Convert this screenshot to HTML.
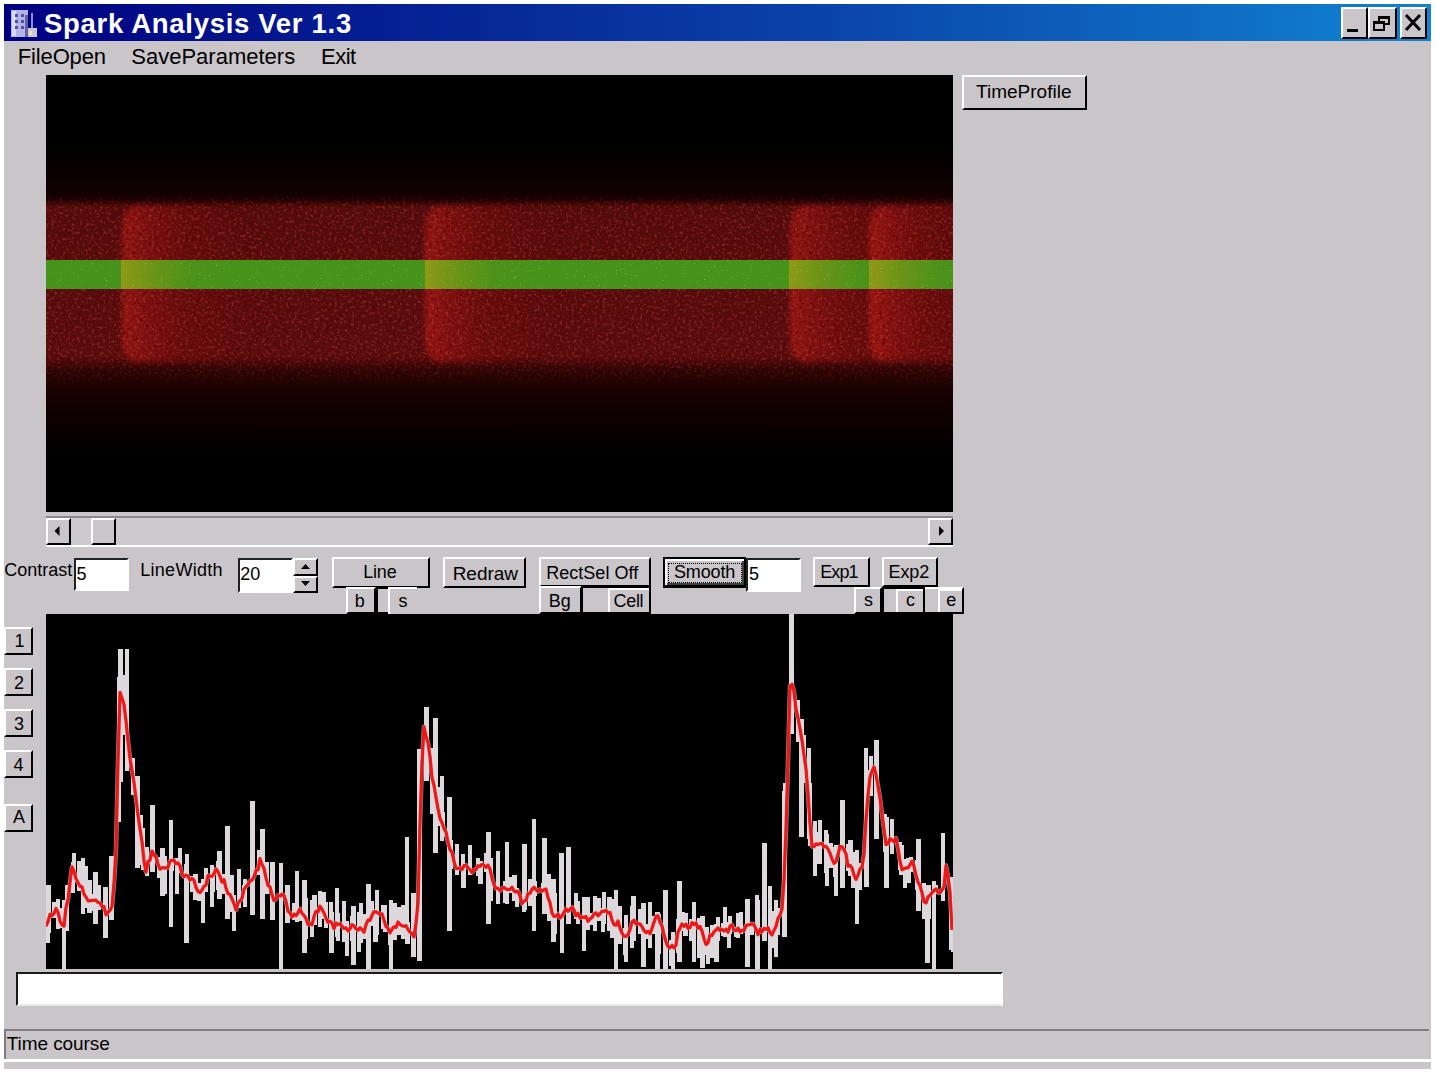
<!DOCTYPE html>
<html><head><meta charset="utf-8"><style>
html,body{margin:0;padding:0;background:#fff;width:1436px;height:1072px;overflow:hidden;position:relative;font-family:"Liberation Sans", sans-serif;}
.abs{position:absolute;}
.win{position:absolute;left:4px;top:4px;width:1427px;height:1065px;background:#c9c5c9;}
.btn{position:absolute;box-sizing:border-box;border:2px solid;border-color:#fff #000 #000 #fff;background:#c9c5c9;display:flex;align-items:center;justify-content:center;color:#000;}
.btn span{line-height:1;white-space:pre;}
.fld{position:absolute;box-sizing:border-box;border:2px solid;border-color:#222 #fff #fff #222;background:#fff;font-size:18.5px;line-height:1;padding:6px 0 0 3px;color:#000;white-space:pre;}
.txt{position:absolute;white-space:pre;line-height:1;color:#000;}
</style></head><body>
<div class="win"></div>
<div class="abs" style="left:4px;top:4px;width:1427px;height:37px;background:linear-gradient(90deg,#000080 0%,#0a40a8 55%,#1084d0 100%);"></div>
<div class="txt" style="left:44px;top:10px;font-size:27.5px;font-weight:bold;color:#fff;letter-spacing:0.7px;">Spark Analysis Ver 1.3</div>
<svg class="abs" style="left:0;top:0" width="44" height="44">
<rect x="11" y="10" width="17" height="27" fill="#b4b4e4"/>
<rect x="12" y="11" width="4" height="25" fill="#d8d8f8"/>
<g fill="#5050a0"><rect x="15" y="14" width="3" height="3"/><rect x="21" y="14" width="3" height="3"/><rect x="15" y="20" width="3" height="3"/><rect x="21" y="20" width="3" height="3"/><rect x="15" y="26" width="3" height="3"/><rect x="21" y="26" width="3" height="3"/></g>
<rect x="25" y="15" width="3" height="22" fill="#6060a8"/>
<rect x="31" y="13" width="2" height="24" fill="#9090d0"/>
<rect x="28" y="28" width="9" height="9" fill="#c8c8d8"/>
<rect x="29" y="31" width="3" height="4" fill="#e8e8b0"/>
</svg>
<div class="abs" style="left:1341px;top:7px;width:27px;height:32px;box-sizing:border-box;border:2px solid;border-color:#fff #000 #000 #fff;background:#c9c5c9;"></div><div class="abs" style="left:1368px;top:7px;width:29px;height:32px;box-sizing:border-box;border:2px solid;border-color:#fff #000 #000 #fff;background:#c9c5c9;"></div><div class="abs" style="left:1400px;top:7px;width:27px;height:32px;box-sizing:border-box;border:2px solid;border-color:#fff #000 #000 #fff;background:#c9c5c9;"></div><div class="abs" style="left:1347px;top:29px;width:11px;height:3px;background:#000;"></div><div class="abs" style="left:1378px;top:16px;width:12px;height:9px;box-sizing:border-box;border:2px solid #000;border-top-width:3px;"></div><div class="abs" style="left:1373px;top:21px;width:12px;height:10px;box-sizing:border-box;border:2px solid #000;border-top-width:3px;background:#c9c5c9;"></div><svg class="abs" style="left:1400px;top:7px" width="27" height="32"><path d="M6,8 L20,23 M20,8 L6,23" stroke="#000" stroke-width="3"/></svg><div class="txt" style="left:17.8px;top:46.0px;font-size:22px;letter-spacing:-0.15px;color:#000;font-weight:normal;">FileOpen</div><div class="txt" style="left:131.3px;top:45.8px;font-size:22px;letter-spacing:0px;color:#000;font-weight:normal;">SaveParameters</div><div class="txt" style="left:321.0px;top:45.8px;font-size:22px;letter-spacing:-0.5px;color:#000;font-weight:normal;">Exit</div><div class="abs" style="left:46px;top:75px;width:907px;height:437px;background:#000;overflow:hidden;">
<div class="abs" style="left:0;top:0;width:907px;height:437px;background:linear-gradient(180deg,rgba(0,0,0,0) 0px,rgba(0,0,0,0) 60px,rgba(8,0,0,1) 95px,rgba(16,1,1,1) 117px,rgba(30,2,2,1) 125px,#3e0606 129px,#520b0b 132px,#560c0c 200px,#580c0c 281px,#4a0909 286px,#300505 294px,#200303 307px,#140101 326px,#0c0000 350px,#000 380px);"></div>
<div class="abs" style="left:76px;top:131px;width:150px;height:156px;border-radius:14px 75px 75px 14px / 24px 78px 78px 24px;filter:blur(2.5px);background:linear-gradient(90deg,rgba(235,40,30,0.42) 0px,rgba(215,30,25,0.3) 22px,rgba(200,20,20,0.14) 60px,rgba(200,20,20,0.04) 110px,rgba(200,20,20,0) 150px);"></div><div class="abs" style="left:379px;top:131px;width:150px;height:156px;border-radius:14px 75px 75px 14px / 24px 78px 78px 24px;filter:blur(2.5px);background:linear-gradient(90deg,rgba(235,40,30,0.42) 0px,rgba(215,30,25,0.3) 22px,rgba(200,20,20,0.14) 60px,rgba(200,20,20,0.04) 110px,rgba(200,20,20,0) 150px);"></div><div class="abs" style="left:744px;top:131px;width:150px;height:156px;border-radius:14px 75px 75px 14px / 24px 78px 78px 24px;filter:blur(2.5px);background:linear-gradient(90deg,rgba(235,40,30,0.42) 0px,rgba(215,30,25,0.3) 22px,rgba(200,20,20,0.14) 60px,rgba(200,20,20,0.04) 110px,rgba(200,20,20,0) 150px);"></div><div class="abs" style="left:823px;top:131px;width:150px;height:156px;border-radius:14px 75px 75px 14px / 24px 78px 78px 24px;filter:blur(2.5px);background:linear-gradient(90deg,rgba(235,40,30,0.42) 0px,rgba(215,30,25,0.3) 22px,rgba(200,20,20,0.14) 60px,rgba(200,20,20,0.04) 110px,rgba(200,20,20,0) 150px);"></div><svg class="abs" style="left:0;top:0" width="907" height="437">
<filter id="nz" x="0" y="0" width="100%" height="100%"><feTurbulence type="fractalNoise" baseFrequency="0.35" numOctaves="2" seed="3"/><feColorMatrix values="0 0 0 0 0.8  0 0 0 0 0.1  0 0 0 0 0.1  5 0 0 0 -2.6"/></filter>
<filter id="nz2" x="0" y="0" width="100%" height="100%"><feTurbulence type="fractalNoise" baseFrequency="0.3" numOctaves="2" seed="9"/><feColorMatrix values="0 0 0 0 0.1  0 0 0 0 0  0 0 0 0 0  5 0 0 0 -2.7"/></filter>
<linearGradient id="fadeG" x1="0" y1="0" x2="0" y2="1"><stop offset="0" stop-color="#fff" stop-opacity="0"/><stop offset="0.06" stop-color="#fff" stop-opacity="1"/><stop offset="0.84" stop-color="#fff" stop-opacity="1"/><stop offset="1" stop-color="#fff" stop-opacity="0"/></linearGradient>
<mask id="fm"><rect x="0" y="120" width="907" height="192" fill="url(#fadeG)"/></mask>
<g mask="url(#fm)"><rect x="0" y="105" width="907" height="260" filter="url(#nz)" opacity="0.26"/><rect x="0" y="105" width="907" height="260" filter="url(#nz2)" opacity="0.5"/></g>
</svg><div class="abs" style="left:0;top:185px;width:907px;height:29px;background:#46921a;"></div><div class="abs" style="left:75px;top:185px;width:110px;height:29px;background:linear-gradient(90deg,rgba(200,160,20,0.55) 0px,rgba(170,150,20,0.38) 30px,rgba(120,140,20,0.12) 70px,rgba(100,140,20,0) 110px);"></div><div class="abs" style="left:379px;top:185px;width:110px;height:29px;background:linear-gradient(90deg,rgba(200,160,20,0.55) 0px,rgba(170,150,20,0.38) 30px,rgba(120,140,20,0.12) 70px,rgba(100,140,20,0) 110px);"></div><div class="abs" style="left:743px;top:185px;width:110px;height:29px;background:linear-gradient(90deg,rgba(200,160,20,0.55) 0px,rgba(170,150,20,0.38) 30px,rgba(120,140,20,0.12) 70px,rgba(100,140,20,0) 110px);"></div><div class="abs" style="left:823px;top:185px;width:110px;height:29px;background:linear-gradient(90deg,rgba(200,160,20,0.55) 0px,rgba(170,150,20,0.38) 30px,rgba(120,140,20,0.12) 70px,rgba(100,140,20,0) 110px);"></div><svg class="abs" style="left:0;top:185px" width="907" height="29"><filter id="nz3" x="0" y="0" width="100%" height="100%"><feTurbulence type="turbulence" baseFrequency="0.6" numOctaves="1" seed="5"/><feColorMatrix values="0 0 0 0 0.6  0 0 0 0 0.9  0 0 0 0 0.3  4 0 0 0 -1.6"/></filter><rect width="907" height="29" filter="url(#nz3)" opacity="0.35"/></svg></div><div class="btn" style="left:962px;top:75px;width:125px;height:35px;"><span style="font-size:18.5px"></span></div><div class="txt" style="left:976.1px;top:82.2px;font-size:19px;letter-spacing:0px;color:#000;font-weight:normal;">TimeProfile</div><div class="abs" style="left:46px;top:516px;width:907px;height:31px;background:#cdc9cd;border-top:2px solid #8a868a;box-sizing:border-box;border-bottom:2px solid #fff;"></div>
<div class="btn" style="left:46px;top:518px;width:25px;height:27px;"></div>
<svg class="abs" style="left:46px;top:516px" width="25" height="30"><path d="M8.5,15 L13.5,10 L13.5,20 Z" fill="#000"/></svg>
<div class="btn" style="left:91px;top:518px;width:25px;height:27px;"></div>
<div class="btn" style="left:928px;top:518px;width:25px;height:27px;"></div>
<svg class="abs" style="left:928px;top:516px" width="25" height="30"><path d="M16,15 L11,10 L11,20 Z" fill="#000"/></svg>
<div class="txt" style="left:4.2px;top:560.7px;font-size:18px;letter-spacing:0px;color:#000;font-weight:normal;">Contrast</div><div class="fld" style="left:74px;top:558px;width:55px;height:33px;"></div><div class="txt" style="left:76.4px;top:564.8px;font-size:18px;letter-spacing:0.0px;color:#000;font-weight:normal;">5</div><div class="txt" style="left:140.2px;top:560.7px;font-size:18px;letter-spacing:0.3px;color:#000;font-weight:normal;">LineWidth</div><div class="fld" style="left:238px;top:558px;width:55px;height:35px;"></div><div class="txt" style="left:240.3px;top:565.4px;font-size:18px;letter-spacing:0.0px;color:#000;font-weight:normal;">20</div><div class="btn" style="left:293px;top:558px;width:25px;height:18px;"><span style="font-size:18.5px"></span></div><div class="btn" style="left:293px;top:576px;width:25px;height:17px;"><span style="font-size:18.5px"></span></div><svg class="abs" style="left:293px;top:558px" width="25" height="35"><path d="M12.5,6 L8,11 L17,11 Z M12.5,28 L8,23 L17,23 Z" fill="#000"/></svg><div class="btn" style="left:332px;top:557px;width:98px;height:31px;"><span style="font-size:18.5px"></span></div><div class="txt" style="left:363.2px;top:563.2px;font-size:18px;letter-spacing:-0.17px;color:#000;font-weight:normal;">Line</div><div class="btn" style="left:346px;top:587px;width:30px;height:27px;"><span style="font-size:18.5px"></span></div><div class="btn" style="left:376px;top:587px;width:41px;height:27px;border-color:#000 #000 #000 #000;"><span style="font-size:18.5px"></span></div><div class="btn" style="left:388px;top:587px;width:29px;height:27px;border-right:none;border-bottom:none;"><span style="font-size:18.5px"></span></div><div class="txt" style="left:354.8px;top:591.6px;font-size:18px;letter-spacing:0.0px;color:#000;font-weight:normal;">b</div><div class="txt" style="left:398.5px;top:591.6px;font-size:18px;letter-spacing:0.0px;color:#000;font-weight:normal;">s</div><div class="btn" style="left:443px;top:557px;width:83px;height:31px;"><span style="font-size:18.5px"></span></div><div class="txt" style="left:452.7px;top:564.2px;font-size:19px;letter-spacing:-0.05px;color:#000;font-weight:normal;">Redraw</div><div class="btn" style="left:539px;top:557px;width:112px;height:30px;"><span style="font-size:18.5px"></span></div><div class="txt" style="left:546.2px;top:563.5px;font-size:18px;letter-spacing:0.03px;color:#000;font-weight:normal;">RectSel Off</div><div class="btn" style="left:539px;top:586px;width:43px;height:28px;"><span style="font-size:18.5px"></span></div><div class="btn" style="left:581px;top:586px;width:70px;height:28px;border-color:#000 #000 #000 #000;"><span style="font-size:18.5px"></span></div><div class="btn" style="left:608px;top:588px;width:41px;height:24px;border-right:none;border-bottom:none;"><span style="font-size:18.5px"></span></div><div class="txt" style="left:548.8px;top:591.7px;font-size:18px;letter-spacing:0.0px;color:#000;font-weight:normal;">Bg</div><div class="txt" style="left:613.5px;top:591.7px;font-size:18px;letter-spacing:-0.3px;color:#000;font-weight:normal;">Cell</div><div class="btn" style="left:663px;top:557px;width:83px;height:31px;border:2px solid #000;border-bottom-width:3px;box-shadow:inset 2px 2px 0 #fff, inset -2px -2px 0 #404040;"><span style="font-size:18.5px"></span></div><div class="abs" style="left:668px;top:563px;width:74px;height:20px;box-sizing:border-box;border:1.5px dotted #000;"></div><div class="txt" style="left:674.0px;top:563.4px;font-size:18px;letter-spacing:-0.14px;color:#000;font-weight:normal;">Smooth</div><div class="fld" style="left:746px;top:558px;width:55px;height:34px;"></div><div class="txt" style="left:749.0px;top:564.7px;font-size:18px;letter-spacing:0.0px;color:#000;font-weight:normal;">5</div><div class="btn" style="left:813px;top:557px;width:57px;height:30px;"><span style="font-size:18.5px"></span></div><div class="txt" style="left:820.3px;top:563.4px;font-size:18px;letter-spacing:-0.94px;color:#000;font-weight:normal;">Exp1</div><div class="btn" style="left:882px;top:557px;width:56px;height:30px;"><span style="font-size:18.5px"></span></div><div class="txt" style="left:888.6px;top:563.4px;font-size:18px;letter-spacing:-0.14px;color:#000;font-weight:normal;">Exp2</div><div class="btn" style="left:854px;top:587px;width:28px;height:27px;"><span style="font-size:18.5px"></span></div><div class="btn" style="left:882px;top:587px;width:43px;height:27px;border-color:#000 #000 #000 #000;"><span style="font-size:18.5px"></span></div><div class="btn" style="left:896px;top:589px;width:27px;height:23px;border-right:none;border-bottom:none;"><span style="font-size:18.5px"></span></div><div class="btn" style="left:925px;top:587px;width:39px;height:27px;border-left:none;"><span style="font-size:18.5px"></span></div><div class="btn" style="left:938px;top:589px;width:24px;height:23px;border-right:none;border-bottom:none;"><span style="font-size:18.5px"></span></div><div class="txt" style="left:864.1px;top:590.8px;font-size:18px;letter-spacing:0.0px;color:#000;font-weight:normal;">s</div><div class="txt" style="left:906.1px;top:590.8px;font-size:18px;letter-spacing:0.0px;color:#000;font-weight:normal;">c</div><div class="txt" style="left:946.3px;top:590.8px;font-size:18px;letter-spacing:0.0px;color:#000;font-weight:normal;">e</div><div class="btn" style="left:4px;top:627px;width:29px;height:28px;"><span style="font-size:18.5px"></span></div><div class="txt" style="left:14.4px;top:631.8px;font-size:18px;letter-spacing:0.0px;color:#000;font-weight:normal;">1</div><div class="btn" style="left:4px;top:668px;width:29px;height:28px;"><span style="font-size:18.5px"></span></div><div class="txt" style="left:13.9px;top:674.4px;font-size:18px;letter-spacing:0.0px;color:#000;font-weight:normal;">2</div><div class="btn" style="left:4px;top:709px;width:29px;height:28px;"><span style="font-size:18.5px"></span></div><div class="txt" style="left:13.9px;top:715.4px;font-size:18px;letter-spacing:0.0px;color:#000;font-weight:normal;">3</div><div class="btn" style="left:4px;top:750px;width:29px;height:28px;"><span style="font-size:18.5px"></span></div><div class="txt" style="left:13.5px;top:756.4px;font-size:18px;letter-spacing:0.0px;color:#000;font-weight:normal;">4</div><div class="btn" style="left:4px;top:804px;width:29px;height:28px;"><span style="font-size:18.5px"></span></div><div class="txt" style="left:12.9px;top:808.0px;font-size:18px;letter-spacing:0.0px;color:#000;font-weight:normal;">A</div><svg class="abs" style="left:0;top:0" width="1436" height="1072">
<rect x="46" y="614" width="907" height="355" fill="#000"/>
<clipPath id="cp"><rect x="46" y="614" width="907" height="355"/></clipPath>
<g clip-path="url(#cp)">
<g fill="#dcd8dc" shape-rendering="crispEdges"><rect x="46" y="885" width="5" height="48"/><rect x="56" y="899" width="4" height="30"/><rect x="62" y="900" width="4" height="69"/><rect x="71" y="862" width="4" height="31"/><rect x="81" y="858" width="4" height="56"/><rect x="87" y="880" width="5" height="33"/><rect x="93" y="872" width="5" height="52"/><rect x="103" y="887" width="5" height="51"/><rect x="109" y="856" width="5" height="64"/><rect x="118" y="649" width="5" height="133"/><rect x="125" y="649" width="4" height="122"/><rect x="135" y="776" width="5" height="92"/><rect x="141" y="828" width="4" height="42"/><rect x="150" y="805" width="5" height="67"/><rect x="160" y="848" width="5" height="48"/><rect x="169" y="820" width="4" height="107"/><rect x="175" y="858" width="4" height="36"/><rect x="184" y="864" width="5" height="79"/><rect x="193" y="874" width="5" height="26"/><rect x="201" y="879" width="4" height="44"/><rect x="210" y="865" width="4" height="42"/><rect x="217" y="851" width="5" height="48"/><rect x="225" y="826" width="5" height="93"/><rect x="232" y="895" width="4" height="36"/><rect x="242" y="885" width="4" height="15"/><rect x="250" y="801" width="5" height="114"/><rect x="260" y="829" width="5" height="90"/><rect x="270" y="862" width="5" height="58"/><rect x="279" y="863" width="4" height="106"/><rect x="285" y="885" width="5" height="38"/><rect x="295" y="871" width="4" height="51"/><rect x="302" y="880" width="5" height="73"/><rect x="312" y="895" width="5" height="30"/><rect x="321" y="892" width="5" height="27"/><rect x="329" y="912" width="5" height="41"/><rect x="335" y="888" width="4" height="49"/><rect x="345" y="921" width="4" height="35"/><rect x="351" y="906" width="5" height="59"/><rect x="359" y="903" width="4" height="40"/><rect x="366" y="884" width="5" height="85"/><rect x="373" y="909" width="5" height="33"/><rect x="381" y="905" width="5" height="24"/><rect x="389" y="900" width="4" height="69"/><rect x="397" y="907" width="5" height="28"/><rect x="405" y="837" width="4" height="107"/><rect x="411" y="893" width="5" height="64"/><rect x="417" y="749" width="5" height="212"/><rect x="424" y="707" width="5" height="74"/><rect x="433" y="718" width="5" height="135"/><rect x="440" y="776" width="4" height="65"/><rect x="447" y="797" width="5" height="134"/><rect x="455" y="844" width="4" height="30"/><rect x="461" y="865" width="5" height="23"/><rect x="468" y="845" width="4" height="30"/><rect x="478" y="861" width="5" height="23"/><rect x="486" y="832" width="5" height="92"/><rect x="496" y="851" width="4" height="49"/><rect x="505" y="842" width="4" height="62"/><rect x="512" y="875" width="5" height="26"/><rect x="522" y="844" width="5" height="66"/><rect x="532" y="819" width="4" height="112"/><rect x="542" y="838" width="5" height="76"/><rect x="551" y="879" width="5" height="63"/><rect x="559" y="853" width="5" height="66"/><rect x="566" y="847" width="5" height="77"/><rect x="576" y="901" width="4" height="23"/><rect x="585" y="897" width="5" height="33"/><rect x="593" y="896" width="4" height="35"/><rect x="601" y="908" width="4" height="24"/><rect x="607" y="897" width="5" height="34"/><rect x="614" y="890" width="4" height="79"/><rect x="623" y="928" width="4" height="27"/><rect x="631" y="896" width="5" height="45"/><rect x="641" y="903" width="5" height="64"/><rect x="648" y="902" width="4" height="46"/><rect x="655" y="912" width="5" height="57"/><rect x="663" y="890" width="5" height="79"/><rect x="671" y="932" width="4" height="37"/><rect x="677" y="881" width="5" height="81"/><rect x="683" y="913" width="5" height="23"/><rect x="692" y="902" width="4" height="60"/><rect x="700" y="916" width="5" height="52"/><rect x="706" y="934" width="4" height="30"/><rect x="714" y="924" width="5" height="38"/><rect x="721" y="923" width="5" height="13"/><rect x="727" y="922" width="4" height="26"/><rect x="736" y="913" width="4" height="25"/><rect x="745" y="899" width="5" height="68"/><rect x="755" y="900" width="5" height="69"/><rect x="762" y="843" width="5" height="98"/><rect x="768" y="886" width="4" height="83"/><rect x="774" y="900" width="4" height="57"/><rect x="782" y="791" width="5" height="146"/><rect x="789" y="614" width="5" height="120"/><rect x="799" y="719" width="5" height="118"/><rect x="807" y="748" width="4" height="91"/><rect x="817" y="832" width="5" height="32"/><rect x="825" y="834" width="4" height="52"/><rect x="833" y="847" width="5" height="30"/><rect x="840" y="800" width="5" height="88"/><rect x="848" y="840" width="5" height="36"/><rect x="855" y="850" width="4" height="74"/><rect x="864" y="770" width="5" height="117"/><rect x="874" y="740" width="5" height="99"/><rect x="884" y="817" width="5" height="71"/><rect x="890" y="819" width="4" height="35"/><rect x="899" y="845" width="5" height="30"/><rect x="906" y="858" width="5" height="25"/><rect x="916" y="839" width="5" height="72"/><rect x="925" y="885" width="5" height="78"/><rect x="932" y="881" width="4" height="88"/><rect x="941" y="833" width="4" height="66"/><rect x="951" y="902" width="5" height="50"/><rect x="46" y="906" width="4" height="37"/><rect x="52" y="902" width="4" height="16"/><rect x="59" y="908" width="4" height="20"/><rect x="65" y="885" width="4" height="46"/><rect x="72" y="853" width="4" height="29"/><rect x="77" y="861" width="4" height="30"/><rect x="84" y="866" width="4" height="42"/><rect x="89" y="894" width="4" height="17"/><rect x="97" y="885" width="4" height="25"/><rect x="103" y="902" width="4" height="16"/><rect x="110" y="869" width="4" height="44"/><rect x="117" y="677" width="4" height="145"/><rect x="123" y="675" width="4" height="60"/><rect x="131" y="758" width="4" height="37"/><rect x="139" y="815" width="4" height="50"/><rect x="145" y="847" width="4" height="29"/><rect x="150" y="848" width="4" height="13"/><rect x="157" y="857" width="4" height="21"/><rect x="163" y="856" width="4" height="38"/><rect x="170" y="859" width="4" height="12"/><rect x="178" y="848" width="4" height="25"/><rect x="185" y="854" width="4" height="36"/><rect x="190" y="876" width="4" height="16"/><rect x="197" y="883" width="4" height="18"/><rect x="204" y="868" width="4" height="24"/><rect x="211" y="868" width="4" height="24"/><rect x="216" y="861" width="4" height="29"/><rect x="222" y="874" width="4" height="20"/><rect x="230" y="875" width="4" height="37"/><rect x="237" y="869" width="4" height="39"/><rect x="243" y="879" width="4" height="28"/><rect x="250" y="867" width="4" height="37"/><rect x="257" y="850" width="4" height="25"/><rect x="265" y="862" width="4" height="32"/><rect x="271" y="885" width="4" height="20"/><rect x="279" y="883" width="4" height="22"/><rect x="286" y="887" width="4" height="28"/><rect x="292" y="903" width="4" height="17"/><rect x="298" y="908" width="4" height="13"/><rect x="304" y="898" width="4" height="41"/><rect x="310" y="900" width="4" height="37"/><rect x="318" y="891" width="4" height="36"/><rect x="324" y="902" width="4" height="26"/><rect x="329" y="902" width="4" height="27"/><rect x="336" y="913" width="4" height="28"/><rect x="342" y="901" width="4" height="41"/><rect x="350" y="916" width="4" height="25"/><rect x="357" y="912" width="4" height="40"/><rect x="362" y="914" width="4" height="25"/><rect x="370" y="901" width="4" height="25"/><rect x="375" y="890" width="4" height="45"/><rect x="383" y="905" width="4" height="27"/><rect x="388" y="926" width="4" height="19"/><rect x="393" y="903" width="4" height="37"/><rect x="401" y="905" width="4" height="34"/><rect x="406" y="922" width="4" height="22"/><rect x="411" y="921" width="4" height="29"/><rect x="417" y="768" width="4" height="154"/><rect x="425" y="727" width="4" height="33"/><rect x="430" y="748" width="4" height="66"/><rect x="436" y="787" width="4" height="39"/><rect x="441" y="812" width="4" height="25"/><rect x="449" y="840" width="4" height="29"/><rect x="455" y="852" width="4" height="23"/><rect x="461" y="854" width="4" height="20"/><rect x="468" y="858" width="4" height="15"/><rect x="476" y="858" width="4" height="18"/><rect x="484" y="853" width="4" height="19"/><rect x="489" y="858" width="4" height="43"/><rect x="496" y="884" width="4" height="20"/><rect x="503" y="881" width="4" height="22"/><rect x="509" y="877" width="4" height="16"/><rect x="515" y="888" width="4" height="19"/><rect x="522" y="882" width="4" height="30"/><rect x="528" y="879" width="4" height="27"/><rect x="533" y="881" width="4" height="15"/><rect x="541" y="883" width="4" height="10"/><rect x="547" y="874" width="4" height="47"/><rect x="553" y="893" width="4" height="41"/><rect x="560" y="903" width="4" height="50"/><rect x="566" y="904" width="4" height="16"/><rect x="574" y="893" width="4" height="26"/><rect x="582" y="897" width="4" height="54"/><rect x="590" y="913" width="4" height="12"/><rect x="597" y="898" width="4" height="23"/><rect x="602" y="892" width="4" height="32"/><rect x="610" y="899" width="4" height="39"/><rect x="618" y="906" width="4" height="38"/><rect x="624" y="915" width="4" height="47"/><rect x="630" y="906" width="4" height="42"/><rect x="638" y="909" width="4" height="25"/><rect x="646" y="924" width="4" height="15"/><rect x="651" y="916" width="4" height="18"/><rect x="657" y="914" width="4" height="40"/><rect x="664" y="925" width="4" height="29"/><rect x="669" y="940" width="4" height="26"/><rect x="676" y="919" width="4" height="34"/><rect x="681" y="912" width="4" height="19"/><rect x="689" y="919" width="4" height="22"/><rect x="697" y="918" width="4" height="40"/><rect x="705" y="927" width="4" height="28"/><rect x="710" y="925" width="4" height="33"/><rect x="716" y="917" width="4" height="24"/><rect x="723" y="907" width="4" height="30"/><rect x="728" y="916" width="4" height="18"/><rect x="734" y="927" width="4" height="10"/><rect x="739" y="912" width="4" height="22"/><rect x="745" y="900" width="4" height="33"/><rect x="750" y="922" width="4" height="13"/><rect x="755" y="895" width="4" height="52"/><rect x="763" y="925" width="4" height="15"/><rect x="771" y="911" width="4" height="37"/><rect x="776" y="908" width="4" height="27"/><rect x="783" y="783" width="4" height="125"/><rect x="790" y="678" width="4" height="23"/><rect x="796" y="700" width="4" height="42"/><rect x="802" y="735" width="4" height="48"/><rect x="808" y="783" width="4" height="63"/><rect x="813" y="821" width="4" height="55"/><rect x="818" y="820" width="4" height="30"/><rect x="824" y="830" width="4" height="43"/><rect x="829" y="843" width="4" height="25"/><rect x="834" y="845" width="4" height="51"/><rect x="840" y="832" width="4" height="25"/><rect x="846" y="844" width="4" height="27"/><rect x="851" y="852" width="4" height="36"/><rect x="858" y="863" width="4" height="27"/><rect x="864" y="748" width="4" height="118"/><rect x="869" y="756" width="4" height="40"/><rect x="875" y="761" width="4" height="51"/><rect x="883" y="814" width="4" height="38"/><rect x="890" y="835" width="4" height="11"/><rect x="898" y="842" width="4" height="28"/><rect x="903" y="859" width="4" height="29"/><rect x="909" y="857" width="4" height="15"/><rect x="915" y="860" width="4" height="30"/><rect x="922" y="883" width="4" height="36"/><rect x="927" y="885" width="4" height="34"/><rect x="934" y="885" width="4" height="9"/><rect x="941" y="871" width="4" height="30"/><rect x="949" y="877" width="4" height="73"/></g><path d="M46.0,926.2 L48.0,921.7 L50.0,914.3 L52.0,915.7 L54.0,913.4 L56.0,908.5 L58.0,912.2 L60.0,921.1 L62.0,924.6 L64.0,926.1 L66.0,907.7 L68.0,899.3 L70.0,882.7 L72.0,866.9 L74.0,871.4 L76.0,878.8 L78.0,882.5 L80.0,886.3 L82.0,886.9 L84.0,894.2 L86.0,897.1 L88.0,900.8 L90.0,900.8 L92.0,900.3 L94.0,900.3 L96.0,900.2 L98.0,902.5 L100.0,902.8 L102.0,906.4 L104.0,906.5 L106.0,914.9 L108.0,912.2 L110.0,910.4 L112.0,906.4 L114.0,882.9 L116.0,849.4 L118.0,761.5 L120.0,692.3 L122.0,698.3 L124.0,704.5 L126.0,721.0 L128.0,741.1 L130.0,758.5 L132.0,770.3 L134.0,782.4 L136.0,798.6 L138.0,815.1 L140.0,829.0 L142.0,841.6 L144.0,861.1 L146.0,872.1 L148.0,861.4 L150.0,860.2 L152.0,851.1 L154.0,855.0 L156.0,856.9 L158.0,863.8 L160.0,869.2 L162.0,867.8 L164.0,867.7 L166.0,868.1 L168.0,867.5 L170.0,861.2 L172.0,860.3 L174.0,860.2 L176.0,863.7 L178.0,862.9 L180.0,865.8 L182.0,874.5 L184.0,876.6 L186.0,875.1 L188.0,876.2 L190.0,880.1 L192.0,878.4 L194.0,880.1 L196.0,887.6 L198.0,891.4 L200.0,892.5 L202.0,890.0 L204.0,886.3 L206.0,885.0 L208.0,875.5 L210.0,876.0 L212.0,876.4 L214.0,873.6 L216.0,869.0 L218.0,871.8 L220.0,876.4 L222.0,882.1 L224.0,879.7 L226.0,888.2 L228.0,893.6 L230.0,894.5 L232.0,899.0 L234.0,903.7 L236.0,910.1 L238.0,902.8 L240.0,901.0 L242.0,898.3 L244.0,889.5 L246.0,886.4 L248.0,884.8 L250.0,880.9 L252.0,880.3 L254.0,876.7 L256.0,870.4 L258.0,870.0 L260.0,858.7 L262.0,864.6 L264.0,868.4 L266.0,877.8 L268.0,885.5 L270.0,886.8 L272.0,894.7 L274.0,900.7 L276.0,898.6 L278.0,895.2 L280.0,896.1 L282.0,894.1 L284.0,895.6 L286.0,901.4 L288.0,911.2 L290.0,912.9 L292.0,917.0 L294.0,914.1 L296.0,915.8 L298.0,912.7 L300.0,908.8 L302.0,913.3 L304.0,915.4 L306.0,918.6 L308.0,924.5 L310.0,923.6 L312.0,924.8 L314.0,916.5 L316.0,911.3 L318.0,911.9 L320.0,906.2 L322.0,909.2 L324.0,912.9 L326.0,918.1 L328.0,922.2 L330.0,921.3 L332.0,923.0 L334.0,928.6 L336.0,923.1 L338.0,924.6 L340.0,923.6 L342.0,926.3 L344.0,928.5 L346.0,927.9 L348.0,931.0 L350.0,928.8 L352.0,924.7 L354.0,925.9 L356.0,928.8 L358.0,930.2 L360.0,927.8 L362.0,929.6 L364.0,932.2 L366.0,924.7 L368.0,920.1 L370.0,920.4 L372.0,915.4 L374.0,911.5 L376.0,911.8 L378.0,912.9 L380.0,914.4 L382.0,913.8 L384.0,920.3 L386.0,926.5 L388.0,928.1 L390.0,932.8 L392.0,929.2 L394.0,926.8 L396.0,927.4 L398.0,922.0 L400.0,924.4 L402.0,925.8 L404.0,926.3 L406.0,925.7 L408.0,929.6 L410.0,932.0 L412.0,933.7 L414.0,936.8 L416.0,923.2 L418.0,902.9 L420.0,823.8 L422.0,762.3 L424.0,726.8 L426.0,736.6 L428.0,742.7 L430.0,756.7 L432.0,777.5 L434.0,785.5 L436.0,797.5 L438.0,808.6 L440.0,818.3 L442.0,822.8 L444.0,828.6 L446.0,832.0 L448.0,842.3 L450.0,849.5 L452.0,852.5 L454.0,861.4 L456.0,868.5 L458.0,868.5 L460.0,867.8 L462.0,869.6 L464.0,865.5 L466.0,865.3 L468.0,867.9 L470.0,869.6 L472.0,872.5 L474.0,869.7 L476.0,869.6 L478.0,865.7 L480.0,866.4 L482.0,864.4 L484.0,865.3 L486.0,867.4 L488.0,865.2 L490.0,869.1 L492.0,878.0 L494.0,884.8 L496.0,888.5 L498.0,888.2 L500.0,890.7 L502.0,888.7 L504.0,887.4 L506.0,889.0 L508.0,889.6 L510.0,889.5 L512.0,887.3 L514.0,891.1 L516.0,892.0 L518.0,891.1 L520.0,896.0 L522.0,903.5 L524.0,901.0 L526.0,900.4 L528.0,893.5 L530.0,893.4 L532.0,889.2 L534.0,887.3 L536.0,889.6 L538.0,891.5 L540.0,889.3 L542.0,891.2 L544.0,889.8 L546.0,889.1 L548.0,897.6 L550.0,902.6 L552.0,913.1 L554.0,916.4 L556.0,916.1 L558.0,914.0 L560.0,918.0 L562.0,915.9 L564.0,912.3 L566.0,908.8 L568.0,911.3 L570.0,909.4 L572.0,907.2 L574.0,910.0 L576.0,915.8 L578.0,913.2 L580.0,918.0 L582.0,916.9 L584.0,917.6 L586.0,916.5 L588.0,921.3 L590.0,918.9 L592.0,917.4 L594.0,913.9 L596.0,912.8 L598.0,915.9 L600.0,913.8 L602.0,911.1 L604.0,911.4 L606.0,910.3 L608.0,913.1 L610.0,912.5 L612.0,920.1 L614.0,924.7 L616.0,925.3 L618.0,920.9 L620.0,928.2 L622.0,933.2 L624.0,936.1 L626.0,936.4 L628.0,934.5 L630.0,929.7 L632.0,922.0 L634.0,920.2 L636.0,923.9 L638.0,923.6 L640.0,924.0 L642.0,926.7 L644.0,930.4 L646.0,932.6 L648.0,931.3 L650.0,933.7 L652.0,928.4 L654.0,922.1 L656.0,916.4 L658.0,915.8 L660.0,922.2 L662.0,925.9 L664.0,934.6 L666.0,941.9 L668.0,946.5 L670.0,947.8 L672.0,945.4 L674.0,948.0 L676.0,944.9 L678.0,932.0 L680.0,928.4 L682.0,924.0 L684.0,926.2 L686.0,924.2 L688.0,928.2 L690.0,927.6 L692.0,922.7 L694.0,924.5 L696.0,923.0 L698.0,928.2 L700.0,926.4 L702.0,931.0 L704.0,938.7 L706.0,944.4 L708.0,942.8 L710.0,934.9 L712.0,935.6 L714.0,931.7 L716.0,930.1 L718.0,927.9 L720.0,930.5 L722.0,929.3 L724.0,930.9 L726.0,929.3 L728.0,932.2 L730.0,926.0 L732.0,924.8 L734.0,930.2 L736.0,930.7 L738.0,928.1 L740.0,931.9 L742.0,930.3 L744.0,930.8 L746.0,925.6 L748.0,924.9 L750.0,924.7 L752.0,923.7 L754.0,924.9 L756.0,929.2 L758.0,934.7 L760.0,929.2 L762.0,931.7 L764.0,928.5 L766.0,929.3 L768.0,927.8 L770.0,932.4 L772.0,934.9 L774.0,930.4 L776.0,926.4 L778.0,918.3 L780.0,915.0 L782.0,909.1 L784.0,880.6 L786.0,829.4 L788.0,760.7 L790.0,686.2 L792.0,684.3 L794.0,691.7 L796.0,708.9 L798.0,717.7 L800.0,729.0 L802.0,740.4 L804.0,755.1 L806.0,768.8 L808.0,793.9 L810.0,823.2 L812.0,846.2 L814.0,846.7 L816.0,843.8 L818.0,844.7 L820.0,843.5 L822.0,843.6 L824.0,846.8 L826.0,846.4 L828.0,849.1 L830.0,853.2 L832.0,859.1 L834.0,863.4 L836.0,861.6 L838.0,854.3 L840.0,846.5 L842.0,846.5 L844.0,849.9 L846.0,853.9 L848.0,866.2 L850.0,865.3 L852.0,868.0 L854.0,875.1 L856.0,879.4 L858.0,875.1 L860.0,869.0 L862.0,867.1 L864.0,854.6 L866.0,820.0 L868.0,795.1 L870.0,776.9 L872.0,771.2 L874.0,767.0 L876.0,774.4 L878.0,786.2 L880.0,798.6 L882.0,813.7 L884.0,829.4 L886.0,844.6 L888.0,843.8 L890.0,838.7 L892.0,840.0 L894.0,841.8 L896.0,838.1 L898.0,848.0 L900.0,861.0 L902.0,869.7 L904.0,868.8 L906.0,867.9 L908.0,867.8 L910.0,865.0 L912.0,861.1 L914.0,866.2 L916.0,875.3 L918.0,882.2 L920.0,885.9 L922.0,892.6 L924.0,901.6 L926.0,902.9 L928.0,896.9 L930.0,895.4 L932.0,892.7 L934.0,890.4 L936.0,889.0 L938.0,892.4 L940.0,892.7 L942.0,889.9 L944.0,886.8 L946.0,865.6 L948.0,876.1 L950.0,892.5 L952.0,930.0" fill="none" stroke="#e0c0c4" stroke-width="4.5" stroke-linejoin="round" opacity="0.7"/>
<path d="M46.0,926.2 L48.0,921.7 L50.0,914.3 L52.0,915.7 L54.0,913.4 L56.0,908.5 L58.0,912.2 L60.0,921.1 L62.0,924.6 L64.0,926.1 L66.0,907.7 L68.0,899.3 L70.0,882.7 L72.0,866.9 L74.0,871.4 L76.0,878.8 L78.0,882.5 L80.0,886.3 L82.0,886.9 L84.0,894.2 L86.0,897.1 L88.0,900.8 L90.0,900.8 L92.0,900.3 L94.0,900.3 L96.0,900.2 L98.0,902.5 L100.0,902.8 L102.0,906.4 L104.0,906.5 L106.0,914.9 L108.0,912.2 L110.0,910.4 L112.0,906.4 L114.0,882.9 L116.0,849.4 L118.0,761.5 L120.0,692.3 L122.0,698.3 L124.0,704.5 L126.0,721.0 L128.0,741.1 L130.0,758.5 L132.0,770.3 L134.0,782.4 L136.0,798.6 L138.0,815.1 L140.0,829.0 L142.0,841.6 L144.0,861.1 L146.0,872.1 L148.0,861.4 L150.0,860.2 L152.0,851.1 L154.0,855.0 L156.0,856.9 L158.0,863.8 L160.0,869.2 L162.0,867.8 L164.0,867.7 L166.0,868.1 L168.0,867.5 L170.0,861.2 L172.0,860.3 L174.0,860.2 L176.0,863.7 L178.0,862.9 L180.0,865.8 L182.0,874.5 L184.0,876.6 L186.0,875.1 L188.0,876.2 L190.0,880.1 L192.0,878.4 L194.0,880.1 L196.0,887.6 L198.0,891.4 L200.0,892.5 L202.0,890.0 L204.0,886.3 L206.0,885.0 L208.0,875.5 L210.0,876.0 L212.0,876.4 L214.0,873.6 L216.0,869.0 L218.0,871.8 L220.0,876.4 L222.0,882.1 L224.0,879.7 L226.0,888.2 L228.0,893.6 L230.0,894.5 L232.0,899.0 L234.0,903.7 L236.0,910.1 L238.0,902.8 L240.0,901.0 L242.0,898.3 L244.0,889.5 L246.0,886.4 L248.0,884.8 L250.0,880.9 L252.0,880.3 L254.0,876.7 L256.0,870.4 L258.0,870.0 L260.0,858.7 L262.0,864.6 L264.0,868.4 L266.0,877.8 L268.0,885.5 L270.0,886.8 L272.0,894.7 L274.0,900.7 L276.0,898.6 L278.0,895.2 L280.0,896.1 L282.0,894.1 L284.0,895.6 L286.0,901.4 L288.0,911.2 L290.0,912.9 L292.0,917.0 L294.0,914.1 L296.0,915.8 L298.0,912.7 L300.0,908.8 L302.0,913.3 L304.0,915.4 L306.0,918.6 L308.0,924.5 L310.0,923.6 L312.0,924.8 L314.0,916.5 L316.0,911.3 L318.0,911.9 L320.0,906.2 L322.0,909.2 L324.0,912.9 L326.0,918.1 L328.0,922.2 L330.0,921.3 L332.0,923.0 L334.0,928.6 L336.0,923.1 L338.0,924.6 L340.0,923.6 L342.0,926.3 L344.0,928.5 L346.0,927.9 L348.0,931.0 L350.0,928.8 L352.0,924.7 L354.0,925.9 L356.0,928.8 L358.0,930.2 L360.0,927.8 L362.0,929.6 L364.0,932.2 L366.0,924.7 L368.0,920.1 L370.0,920.4 L372.0,915.4 L374.0,911.5 L376.0,911.8 L378.0,912.9 L380.0,914.4 L382.0,913.8 L384.0,920.3 L386.0,926.5 L388.0,928.1 L390.0,932.8 L392.0,929.2 L394.0,926.8 L396.0,927.4 L398.0,922.0 L400.0,924.4 L402.0,925.8 L404.0,926.3 L406.0,925.7 L408.0,929.6 L410.0,932.0 L412.0,933.7 L414.0,936.8 L416.0,923.2 L418.0,902.9 L420.0,823.8 L422.0,762.3 L424.0,726.8 L426.0,736.6 L428.0,742.7 L430.0,756.7 L432.0,777.5 L434.0,785.5 L436.0,797.5 L438.0,808.6 L440.0,818.3 L442.0,822.8 L444.0,828.6 L446.0,832.0 L448.0,842.3 L450.0,849.5 L452.0,852.5 L454.0,861.4 L456.0,868.5 L458.0,868.5 L460.0,867.8 L462.0,869.6 L464.0,865.5 L466.0,865.3 L468.0,867.9 L470.0,869.6 L472.0,872.5 L474.0,869.7 L476.0,869.6 L478.0,865.7 L480.0,866.4 L482.0,864.4 L484.0,865.3 L486.0,867.4 L488.0,865.2 L490.0,869.1 L492.0,878.0 L494.0,884.8 L496.0,888.5 L498.0,888.2 L500.0,890.7 L502.0,888.7 L504.0,887.4 L506.0,889.0 L508.0,889.6 L510.0,889.5 L512.0,887.3 L514.0,891.1 L516.0,892.0 L518.0,891.1 L520.0,896.0 L522.0,903.5 L524.0,901.0 L526.0,900.4 L528.0,893.5 L530.0,893.4 L532.0,889.2 L534.0,887.3 L536.0,889.6 L538.0,891.5 L540.0,889.3 L542.0,891.2 L544.0,889.8 L546.0,889.1 L548.0,897.6 L550.0,902.6 L552.0,913.1 L554.0,916.4 L556.0,916.1 L558.0,914.0 L560.0,918.0 L562.0,915.9 L564.0,912.3 L566.0,908.8 L568.0,911.3 L570.0,909.4 L572.0,907.2 L574.0,910.0 L576.0,915.8 L578.0,913.2 L580.0,918.0 L582.0,916.9 L584.0,917.6 L586.0,916.5 L588.0,921.3 L590.0,918.9 L592.0,917.4 L594.0,913.9 L596.0,912.8 L598.0,915.9 L600.0,913.8 L602.0,911.1 L604.0,911.4 L606.0,910.3 L608.0,913.1 L610.0,912.5 L612.0,920.1 L614.0,924.7 L616.0,925.3 L618.0,920.9 L620.0,928.2 L622.0,933.2 L624.0,936.1 L626.0,936.4 L628.0,934.5 L630.0,929.7 L632.0,922.0 L634.0,920.2 L636.0,923.9 L638.0,923.6 L640.0,924.0 L642.0,926.7 L644.0,930.4 L646.0,932.6 L648.0,931.3 L650.0,933.7 L652.0,928.4 L654.0,922.1 L656.0,916.4 L658.0,915.8 L660.0,922.2 L662.0,925.9 L664.0,934.6 L666.0,941.9 L668.0,946.5 L670.0,947.8 L672.0,945.4 L674.0,948.0 L676.0,944.9 L678.0,932.0 L680.0,928.4 L682.0,924.0 L684.0,926.2 L686.0,924.2 L688.0,928.2 L690.0,927.6 L692.0,922.7 L694.0,924.5 L696.0,923.0 L698.0,928.2 L700.0,926.4 L702.0,931.0 L704.0,938.7 L706.0,944.4 L708.0,942.8 L710.0,934.9 L712.0,935.6 L714.0,931.7 L716.0,930.1 L718.0,927.9 L720.0,930.5 L722.0,929.3 L724.0,930.9 L726.0,929.3 L728.0,932.2 L730.0,926.0 L732.0,924.8 L734.0,930.2 L736.0,930.7 L738.0,928.1 L740.0,931.9 L742.0,930.3 L744.0,930.8 L746.0,925.6 L748.0,924.9 L750.0,924.7 L752.0,923.7 L754.0,924.9 L756.0,929.2 L758.0,934.7 L760.0,929.2 L762.0,931.7 L764.0,928.5 L766.0,929.3 L768.0,927.8 L770.0,932.4 L772.0,934.9 L774.0,930.4 L776.0,926.4 L778.0,918.3 L780.0,915.0 L782.0,909.1 L784.0,880.6 L786.0,829.4 L788.0,760.7 L790.0,686.2 L792.0,684.3 L794.0,691.7 L796.0,708.9 L798.0,717.7 L800.0,729.0 L802.0,740.4 L804.0,755.1 L806.0,768.8 L808.0,793.9 L810.0,823.2 L812.0,846.2 L814.0,846.7 L816.0,843.8 L818.0,844.7 L820.0,843.5 L822.0,843.6 L824.0,846.8 L826.0,846.4 L828.0,849.1 L830.0,853.2 L832.0,859.1 L834.0,863.4 L836.0,861.6 L838.0,854.3 L840.0,846.5 L842.0,846.5 L844.0,849.9 L846.0,853.9 L848.0,866.2 L850.0,865.3 L852.0,868.0 L854.0,875.1 L856.0,879.4 L858.0,875.1 L860.0,869.0 L862.0,867.1 L864.0,854.6 L866.0,820.0 L868.0,795.1 L870.0,776.9 L872.0,771.2 L874.0,767.0 L876.0,774.4 L878.0,786.2 L880.0,798.6 L882.0,813.7 L884.0,829.4 L886.0,844.6 L888.0,843.8 L890.0,838.7 L892.0,840.0 L894.0,841.8 L896.0,838.1 L898.0,848.0 L900.0,861.0 L902.0,869.7 L904.0,868.8 L906.0,867.9 L908.0,867.8 L910.0,865.0 L912.0,861.1 L914.0,866.2 L916.0,875.3 L918.0,882.2 L920.0,885.9 L922.0,892.6 L924.0,901.6 L926.0,902.9 L928.0,896.9 L930.0,895.4 L932.0,892.7 L934.0,890.4 L936.0,889.0 L938.0,892.4 L940.0,892.7 L942.0,889.9 L944.0,886.8 L946.0,865.6 L948.0,876.1 L950.0,892.5 L952.0,930.0" fill="none" stroke="#b01818" stroke-width="3.2" stroke-linejoin="round" opacity="0.8"/><path d="M46.0,926.2 L48.0,921.7 L50.0,914.3 L52.0,915.7 L54.0,913.4 L56.0,908.5 L58.0,912.2 L60.0,921.1 L62.0,924.6 L64.0,926.1 L66.0,907.7 L68.0,899.3 L70.0,882.7 L72.0,866.9 L74.0,871.4 L76.0,878.8 L78.0,882.5 L80.0,886.3 L82.0,886.9 L84.0,894.2 L86.0,897.1 L88.0,900.8 L90.0,900.8 L92.0,900.3 L94.0,900.3 L96.0,900.2 L98.0,902.5 L100.0,902.8 L102.0,906.4 L104.0,906.5 L106.0,914.9 L108.0,912.2 L110.0,910.4 L112.0,906.4 L114.0,882.9 L116.0,849.4 L118.0,761.5 L120.0,692.3 L122.0,698.3 L124.0,704.5 L126.0,721.0 L128.0,741.1 L130.0,758.5 L132.0,770.3 L134.0,782.4 L136.0,798.6 L138.0,815.1 L140.0,829.0 L142.0,841.6 L144.0,861.1 L146.0,872.1 L148.0,861.4 L150.0,860.2 L152.0,851.1 L154.0,855.0 L156.0,856.9 L158.0,863.8 L160.0,869.2 L162.0,867.8 L164.0,867.7 L166.0,868.1 L168.0,867.5 L170.0,861.2 L172.0,860.3 L174.0,860.2 L176.0,863.7 L178.0,862.9 L180.0,865.8 L182.0,874.5 L184.0,876.6 L186.0,875.1 L188.0,876.2 L190.0,880.1 L192.0,878.4 L194.0,880.1 L196.0,887.6 L198.0,891.4 L200.0,892.5 L202.0,890.0 L204.0,886.3 L206.0,885.0 L208.0,875.5 L210.0,876.0 L212.0,876.4 L214.0,873.6 L216.0,869.0 L218.0,871.8 L220.0,876.4 L222.0,882.1 L224.0,879.7 L226.0,888.2 L228.0,893.6 L230.0,894.5 L232.0,899.0 L234.0,903.7 L236.0,910.1 L238.0,902.8 L240.0,901.0 L242.0,898.3 L244.0,889.5 L246.0,886.4 L248.0,884.8 L250.0,880.9 L252.0,880.3 L254.0,876.7 L256.0,870.4 L258.0,870.0 L260.0,858.7 L262.0,864.6 L264.0,868.4 L266.0,877.8 L268.0,885.5 L270.0,886.8 L272.0,894.7 L274.0,900.7 L276.0,898.6 L278.0,895.2 L280.0,896.1 L282.0,894.1 L284.0,895.6 L286.0,901.4 L288.0,911.2 L290.0,912.9 L292.0,917.0 L294.0,914.1 L296.0,915.8 L298.0,912.7 L300.0,908.8 L302.0,913.3 L304.0,915.4 L306.0,918.6 L308.0,924.5 L310.0,923.6 L312.0,924.8 L314.0,916.5 L316.0,911.3 L318.0,911.9 L320.0,906.2 L322.0,909.2 L324.0,912.9 L326.0,918.1 L328.0,922.2 L330.0,921.3 L332.0,923.0 L334.0,928.6 L336.0,923.1 L338.0,924.6 L340.0,923.6 L342.0,926.3 L344.0,928.5 L346.0,927.9 L348.0,931.0 L350.0,928.8 L352.0,924.7 L354.0,925.9 L356.0,928.8 L358.0,930.2 L360.0,927.8 L362.0,929.6 L364.0,932.2 L366.0,924.7 L368.0,920.1 L370.0,920.4 L372.0,915.4 L374.0,911.5 L376.0,911.8 L378.0,912.9 L380.0,914.4 L382.0,913.8 L384.0,920.3 L386.0,926.5 L388.0,928.1 L390.0,932.8 L392.0,929.2 L394.0,926.8 L396.0,927.4 L398.0,922.0 L400.0,924.4 L402.0,925.8 L404.0,926.3 L406.0,925.7 L408.0,929.6 L410.0,932.0 L412.0,933.7 L414.0,936.8 L416.0,923.2 L418.0,902.9 L420.0,823.8 L422.0,762.3 L424.0,726.8 L426.0,736.6 L428.0,742.7 L430.0,756.7 L432.0,777.5 L434.0,785.5 L436.0,797.5 L438.0,808.6 L440.0,818.3 L442.0,822.8 L444.0,828.6 L446.0,832.0 L448.0,842.3 L450.0,849.5 L452.0,852.5 L454.0,861.4 L456.0,868.5 L458.0,868.5 L460.0,867.8 L462.0,869.6 L464.0,865.5 L466.0,865.3 L468.0,867.9 L470.0,869.6 L472.0,872.5 L474.0,869.7 L476.0,869.6 L478.0,865.7 L480.0,866.4 L482.0,864.4 L484.0,865.3 L486.0,867.4 L488.0,865.2 L490.0,869.1 L492.0,878.0 L494.0,884.8 L496.0,888.5 L498.0,888.2 L500.0,890.7 L502.0,888.7 L504.0,887.4 L506.0,889.0 L508.0,889.6 L510.0,889.5 L512.0,887.3 L514.0,891.1 L516.0,892.0 L518.0,891.1 L520.0,896.0 L522.0,903.5 L524.0,901.0 L526.0,900.4 L528.0,893.5 L530.0,893.4 L532.0,889.2 L534.0,887.3 L536.0,889.6 L538.0,891.5 L540.0,889.3 L542.0,891.2 L544.0,889.8 L546.0,889.1 L548.0,897.6 L550.0,902.6 L552.0,913.1 L554.0,916.4 L556.0,916.1 L558.0,914.0 L560.0,918.0 L562.0,915.9 L564.0,912.3 L566.0,908.8 L568.0,911.3 L570.0,909.4 L572.0,907.2 L574.0,910.0 L576.0,915.8 L578.0,913.2 L580.0,918.0 L582.0,916.9 L584.0,917.6 L586.0,916.5 L588.0,921.3 L590.0,918.9 L592.0,917.4 L594.0,913.9 L596.0,912.8 L598.0,915.9 L600.0,913.8 L602.0,911.1 L604.0,911.4 L606.0,910.3 L608.0,913.1 L610.0,912.5 L612.0,920.1 L614.0,924.7 L616.0,925.3 L618.0,920.9 L620.0,928.2 L622.0,933.2 L624.0,936.1 L626.0,936.4 L628.0,934.5 L630.0,929.7 L632.0,922.0 L634.0,920.2 L636.0,923.9 L638.0,923.6 L640.0,924.0 L642.0,926.7 L644.0,930.4 L646.0,932.6 L648.0,931.3 L650.0,933.7 L652.0,928.4 L654.0,922.1 L656.0,916.4 L658.0,915.8 L660.0,922.2 L662.0,925.9 L664.0,934.6 L666.0,941.9 L668.0,946.5 L670.0,947.8 L672.0,945.4 L674.0,948.0 L676.0,944.9 L678.0,932.0 L680.0,928.4 L682.0,924.0 L684.0,926.2 L686.0,924.2 L688.0,928.2 L690.0,927.6 L692.0,922.7 L694.0,924.5 L696.0,923.0 L698.0,928.2 L700.0,926.4 L702.0,931.0 L704.0,938.7 L706.0,944.4 L708.0,942.8 L710.0,934.9 L712.0,935.6 L714.0,931.7 L716.0,930.1 L718.0,927.9 L720.0,930.5 L722.0,929.3 L724.0,930.9 L726.0,929.3 L728.0,932.2 L730.0,926.0 L732.0,924.8 L734.0,930.2 L736.0,930.7 L738.0,928.1 L740.0,931.9 L742.0,930.3 L744.0,930.8 L746.0,925.6 L748.0,924.9 L750.0,924.7 L752.0,923.7 L754.0,924.9 L756.0,929.2 L758.0,934.7 L760.0,929.2 L762.0,931.7 L764.0,928.5 L766.0,929.3 L768.0,927.8 L770.0,932.4 L772.0,934.9 L774.0,930.4 L776.0,926.4 L778.0,918.3 L780.0,915.0 L782.0,909.1 L784.0,880.6 L786.0,829.4 L788.0,760.7 L790.0,686.2 L792.0,684.3 L794.0,691.7 L796.0,708.9 L798.0,717.7 L800.0,729.0 L802.0,740.4 L804.0,755.1 L806.0,768.8 L808.0,793.9 L810.0,823.2 L812.0,846.2 L814.0,846.7 L816.0,843.8 L818.0,844.7 L820.0,843.5 L822.0,843.6 L824.0,846.8 L826.0,846.4 L828.0,849.1 L830.0,853.2 L832.0,859.1 L834.0,863.4 L836.0,861.6 L838.0,854.3 L840.0,846.5 L842.0,846.5 L844.0,849.9 L846.0,853.9 L848.0,866.2 L850.0,865.3 L852.0,868.0 L854.0,875.1 L856.0,879.4 L858.0,875.1 L860.0,869.0 L862.0,867.1 L864.0,854.6 L866.0,820.0 L868.0,795.1 L870.0,776.9 L872.0,771.2 L874.0,767.0 L876.0,774.4 L878.0,786.2 L880.0,798.6 L882.0,813.7 L884.0,829.4 L886.0,844.6 L888.0,843.8 L890.0,838.7 L892.0,840.0 L894.0,841.8 L896.0,838.1 L898.0,848.0 L900.0,861.0 L902.0,869.7 L904.0,868.8 L906.0,867.9 L908.0,867.8 L910.0,865.0 L912.0,861.1 L914.0,866.2 L916.0,875.3 L918.0,882.2 L920.0,885.9 L922.0,892.6 L924.0,901.6 L926.0,902.9 L928.0,896.9 L930.0,895.4 L932.0,892.7 L934.0,890.4 L936.0,889.0 L938.0,892.4 L940.0,892.7 L942.0,889.9 L944.0,886.8 L946.0,865.6 L948.0,876.1 L950.0,892.5 L952.0,930.0" fill="none" stroke="#ff1010" stroke-width="2.2" stroke-linejoin="round"/>
</g></svg><div class="abs" style="left:16px;top:972px;width:987px;height:34px;box-sizing:border-box;background:#fff;border:2px solid;border-color:#1a1a1a #fff #e8e8e8 #1a1a1a;"></div><div class="abs" style="left:4px;top:1029px;width:1425px;height:30px;box-sizing:border-box;border-top:2px solid #807c80;border-left:2px solid #807c80;"></div><div class="txt" style="left:6.8px;top:1034.1px;font-size:19px;letter-spacing:-0.08px;color:#000;font-weight:normal;">Time course</div><div class="abs" style="left:4px;top:1059px;width:1427px;height:3px;background:#fff;"></div></body></html>
